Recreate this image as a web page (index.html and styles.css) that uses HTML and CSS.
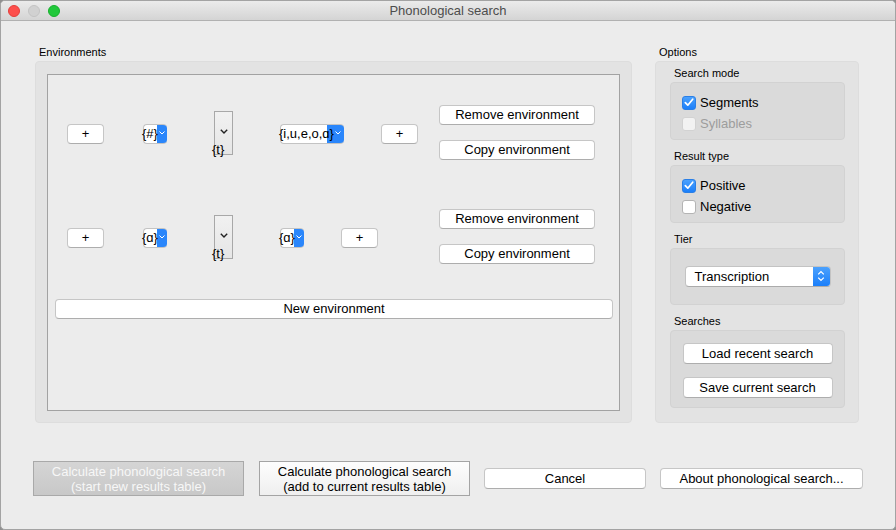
FILE: index.html
```html
<!DOCTYPE html>
<html>
<head>
<meta charset="utf-8">
<title>Phonological search</title>
<link rel="stylesheet" href="styles.css">
</head>
<body>
<div class="window">
  <div class="titlebar">
    <div class="lights">
      <span class="light red"></span>
      <span class="light gray"></span>
      <span class="light green"></span>
    </div>
    <div class="title">Phonological search</div>
    <div></div>
  </div>
  <div class="content">
    <div class="main">
      <section class="env-col">
        <div class="group-label">Environments</div>
        <div class="group env-group">
          <div class="scroll">
            <div class="env-row">
              <button class="btn plus">+</button>
              <div class="combo combo-a"><span class="combo-text">{#}</span><svg class="chev" width="6" height="4" viewBox="0 0 6 4"><polyline points="0.5,0.5 3,3 5.5,0.5" fill="none" stroke="#fff" stroke-width="1"/></svg></div>
              <div class="spin"><span class="dash"></span><svg class="spin-chev" width="8" height="5" viewBox="0 0 8 5"><polyline points="0.8,0.8 4,4 7.2,0.8" fill="none" stroke="#222" stroke-width="1.4"/></svg><span class="spin-text">{t}</span></div>
              <div class="combo combo-b wide"><span class="combo-text">{i,u,e,o,ɑ}</span><svg class="chev" width="6" height="4" viewBox="0 0 6 4"><polyline points="0.5,0.5 3,3 5.5,0.5" fill="none" stroke="#fff" stroke-width="1"/></svg></div>
              <button class="btn plus plus-b">+</button>
              <div class="btn-col">
                <button class="btn">Remove environment</button>
                <button class="btn">Copy environment</button>
              </div>
            </div>
            <div class="env-row row2">
              <button class="btn plus">+</button>
              <div class="combo combo-a"><span class="combo-text">{ɑ}</span><svg class="chev" width="6" height="4" viewBox="0 0 6 4"><polyline points="0.5,0.5 3,3 5.5,0.5" fill="none" stroke="#fff" stroke-width="1"/></svg></div>
              <div class="spin"><span class="dash"></span><svg class="spin-chev" width="8" height="5" viewBox="0 0 8 5"><polyline points="0.8,0.8 4,4 7.2,0.8" fill="none" stroke="#222" stroke-width="1.4"/></svg><span class="spin-text">{t}</span></div>
              <div class="combo combo-b"><span class="combo-text">{ɑ}</span><svg class="chev" width="6" height="4" viewBox="0 0 6 4"><polyline points="0.5,0.5 3,3 5.5,0.5" fill="none" stroke="#fff" stroke-width="1"/></svg></div>
              <button class="btn plus plus-b">+</button>
              <div class="btn-col">
                <button class="btn">Remove environment</button>
                <button class="btn">Copy environment</button>
              </div>
            </div>
            <button class="btn new-env">New environment</button>
          </div>
        </div>
      </section>
      <section class="opt-col">
        <div class="group-label">Options</div>
        <div class="group opt-group">
          <div class="sub-label first">Search mode</div>
          <div class="subgroup checks">
            <label class="check"><span class="box checked"><svg width="10" height="9" viewBox="0 0 10 9"><polyline points="1.3,4.6 3.8,7.2 8.7,1.2" fill="none" stroke="#fff" stroke-width="1.7" stroke-linecap="round" stroke-linejoin="round"/></svg></span>Segments</label>
            <label class="check disabled"><span class="box"></span>Syllables</label>
          </div>
          <div class="sub-label">Result type</div>
          <div class="subgroup checks">
            <label class="check"><span class="box checked"><svg width="10" height="9" viewBox="0 0 10 9"><polyline points="1.3,4.6 3.8,7.2 8.7,1.2" fill="none" stroke="#fff" stroke-width="1.7" stroke-linecap="round" stroke-linejoin="round"/></svg></span>Positive</label>
            <label class="check"><span class="box"></span>Negative</label>
          </div>
          <div class="sub-label">Tier</div>
          <div class="subgroup tier">
            <div class="select"><span class="select-text">Transcription</span><span class="stepper"><svg width="8" height="12" viewBox="0 0 8 12"><polyline points="1.2,4.4 4,1.6 6.8,4.4" fill="none" stroke="#fff" stroke-width="1.3"/><polyline points="1.2,7.6 4,10.4 6.8,7.6" fill="none" stroke="#fff" stroke-width="1.3"/></svg></span></div>
          </div>
          <div class="sub-label">Searches</div>
          <div class="subgroup searches">
            <button class="btn">Load recent search</button>
            <button class="btn">Save current search</button>
          </div>
        </div>
      </section>
    </div>
    <div class="bottom">
      <button class="tall disabled">Calculate phonological search<br>(start new results table)</button>
      <button class="tall active">Calculate phonological search<br>(add to current results table)</button>
      <button class="btn cancel">Cancel</button>
      <button class="btn about">About phonological search...</button>
    </div>
  </div>
</div>
</body>
</html>
```
FILE: styles.css
```css
* { box-sizing: border-box; }
html, body { margin: 0; padding: 0; }
body {
  width: 896px;
  height: 530px;
  overflow: hidden;
  background: #8f8f8f;
  font-family: "Liberation Sans", Arial, sans-serif;
  font-size: 13px;
  color: #000;
}
.window {
  width: 896px;
  height: 530px;
  background: #ececec;
  border: 1px solid #a3a3a3;
  border-radius: 5px;
  overflow: hidden;
  display: flex;
  flex-direction: column;
}
.titlebar {
  height: 20px;
  flex: none;
  background: linear-gradient(#ebebeb, #d4d4d4);
  border-bottom: 1px solid #b1b1b1;
  display: grid;
  grid-template-columns: 1fr auto 1fr;
  align-items: center;
}
.lights { display: flex; gap: 8px; padding-left: 7px; }
.light {
  width: 12px; height: 12px; border-radius: 50%;
  display: block;
}
.light.red { background: #fd4f4c; border: 1px solid #e33e3b; }
.light.gray { background: #d1d1d1; border: 1px solid #c3c3c3; }
.light.green { background: #21c83b; border: 1px solid #16b02c; }
.title { font-size: 13px; color: #4d4d4d; line-height: 19px; }

.content {
  flex: 1;
  padding: 24px 36px 0 34px;
}
.main { display: flex; gap: 23px; }
.env-col { width: 597px; flex: none; }
.opt-col { width: 204px; flex: none; }
.group-label {
  font-size: 11px;
  line-height: 14px;
  height: 14px;
  margin-bottom: 2px;
  padding-left: 4px;
}
.group {
  height: 362px;
  background: #e3e3e3;
  border: 1px solid #dddddd;
  border-radius: 4px;
}
.env-group { padding: 12px 11px 11px 11px; }
.scroll {
  height: 337px;
  border: 1px solid #a2a2a2;
  background: #ececec;
  padding: 29px 6px 0 7px;
}
.env-row {
  display: flex;
  align-items: center;
  height: 56px;
  padding-left: 12px;
  padding-right: 18px;
}
.env-row > * { flex: none; }
.env-row.row2 { margin-top: 48px; }

.btn {
  font-family: "Liberation Sans", Arial, sans-serif;
  font-size: 13px;
  color: #000;
  height: 20px;
  line-height: 18px;
  padding: 0;
  background: #fff;
  border: 1px solid #c6c6c6;
  border-bottom-color: #adadad;
  border-radius: 4px;
  text-align: center;
  white-space: nowrap;
}
.plus { width: 37px; margin-top: 4px; font-size: 13px; }
.plus-b { margin-left: 37px; }
.combo {
  height: 20px;
  width: 24px;
  margin-top: 4px;
  border: 1px solid #c3c3c3;
  border-right: none;
  border-radius: 4px;
  background: linear-gradient(to right, #fff calc(100% - 10px), #2a86fb calc(100% - 10px));
  display: flex;
  align-items: center;
  justify-content: space-between;
  line-height: 18px;
}
.combo.wide {
  width: 64px;
  background: linear-gradient(to right, #fff calc(100% - 17px), #2a86fb calc(100% - 17px));
}
.combo-a { margin-left: 39px; }
.combo-b { margin-left: 47px; }
.combo-text { margin-left: -2px; white-space: nowrap; }
.chev { flex: none; margin-right: 2px; margin-top: -2px; }
.combo.wide .chev { margin-right: 3px; }
.spin {
  width: 19px;
  height: 44px;
  margin-left: 47px;
  margin-top: 2px;
  border: 1px solid #a8a8a8;
  background: linear-gradient(#f1f1f1, #e6e6e6);
  display: flex;
  flex-direction: column;
  padding-top: 13px;
}
.dash {
  display: block;
  width: 5px;
  height: 2px;
  background: #9a9a9a;
  margin-left: 2px;
  align-self: flex-start;
}
.spin-chev { align-self: center; margin-top: 4px; flex: none; }
.spin-text {
  align-self: flex-start;
  margin-left: -3px;
  margin-top: 9px;
  line-height: 14px;
  white-space: nowrap;
}
.btn-col {
  margin-left: auto;
  width: 156px;
  display: flex;
  flex-direction: column;
  gap: 15px;
}
.btn-col .btn { width: 156px; }
.new-env { width: 100%; margin-top: 35px; }

.opt-group { padding: 4px 13px 0 14px; }
.sub-label {
  font-size: 11px;
  line-height: 14px;
  height: 14px;
  padding-left: 4px;
  margin-top: 9px;
  margin-bottom: 2px;
}
.sub-label.first { margin-top: 0; }
.subgroup {
  background: #dadada;
  border: 1px solid #d2d2d2;
  border-radius: 4px;
}
.checks { height: 58px; padding: 9px 0 0 11px; }
.check {
  display: flex;
  align-items: center;
  height: 21px;
  line-height: 21px;
}
.box {
  width: 14px; height: 14px;
  border-radius: 3px;
  background: #fff;
  border: 1px solid #b4b4b4;
  margin-right: 4px;
  display: flex;
  align-items: center;
  justify-content: center;
  flex: none;
}
.box.checked {
  background: linear-gradient(#4ba1fd, #1b7ffa);
  border-color: #2a7fe6;
}
.check.disabled { color: #9d9d9d; }
.check.disabled .box { background: #f2f2f2; border-color: #d2d2d2; }
.tier {
  height: 57px;
  display: flex;
  align-items: center;
  justify-content: center;
}
.select {
  width: 146px;
  height: 21px;
  background: #fff;
  border: 1px solid #c3c3c3;
  border-bottom-color: #ababab;
  border-radius: 4px;
  display: flex;
  align-items: stretch;
  overflow: hidden;
  margin-top: -1px;
}
.select-text { flex: 1; padding-left: 9px; line-height: 19px; }
.stepper {
  width: 17px;
  background: linear-gradient(#4ba1fd, #1b7ffa);
  display: flex;
  align-items: center;
  justify-content: center;
}
.searches {
  height: 78px;
  display: flex;
  flex-direction: column;
  align-items: center;
  padding-top: 12px;
  gap: 13px;
}
.searches .btn { width: 150px; height: 21px; line-height: 19px; }

.bottom {
  display: flex;
  align-items: center;
  margin-top: 38px;
  margin-left: -2px;
}
.bottom > * { flex: none; }
.tall {
  font-family: "Liberation Sans", Arial, sans-serif;
  font-size: 13px;
  width: 211px;
  height: 35px;
  line-height: 15px;
  padding: 0;
  text-align: center;
}
.tall.disabled {
  background: linear-gradient(#d5d5d5, #c8c8c8);
  border: 1px solid #a9a9a9;
  color: #f7f7f7;
}
.tall.active {
  margin-left: 15px;
  background: linear-gradient(#fdfdfd, #efefef);
  border: 1px solid #a4a4a4;
  color: #000;
}
.cancel { width: 162px; height: 21px; line-height: 19px; margin-left: 14px; }
.about { width: 203px; height: 21px; line-height: 19px; margin-left: 14px; }
```
